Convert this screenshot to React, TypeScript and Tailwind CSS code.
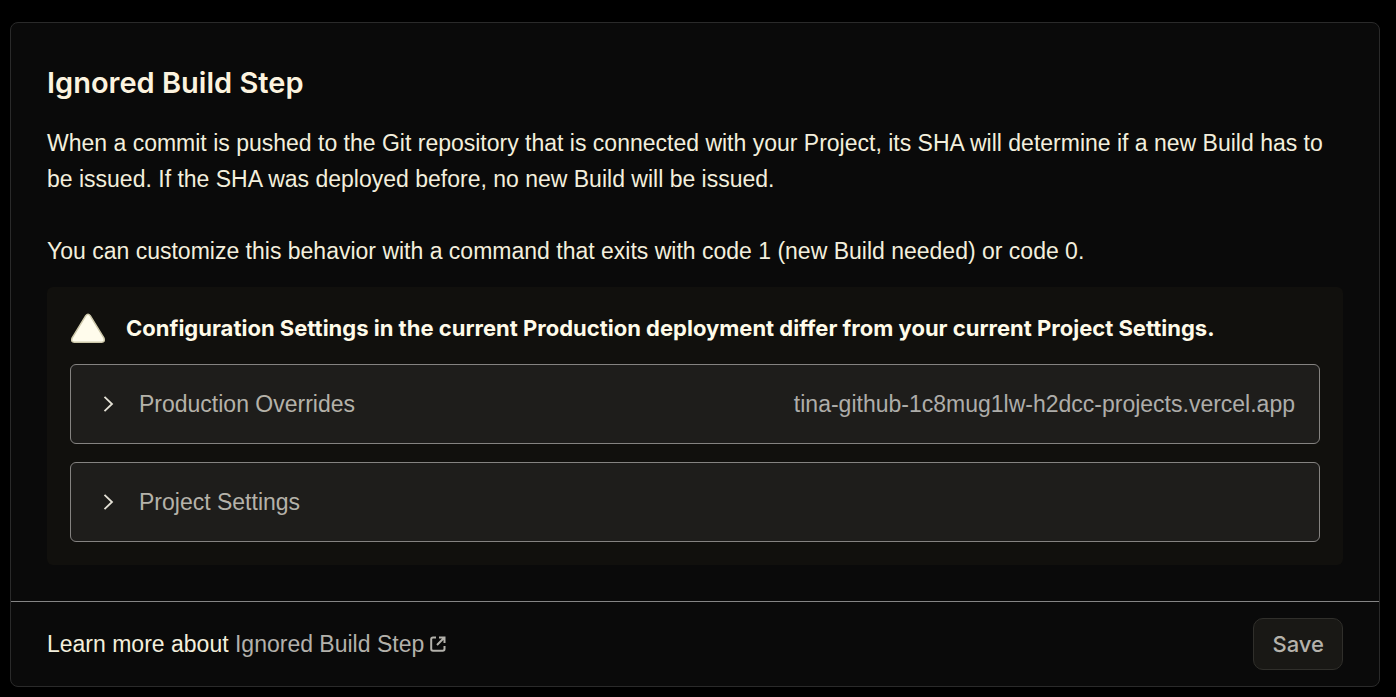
import type { ReactNode } from "react";

function Disclosure({ title, children }: { title: string; children?: ReactNode }) {
  return (
    <button
      type="button"
      aria-expanded="false"
      className="flex h-20 w-full items-center rounded-md border border-[#858381] bg-[#1e1d1b] px-6 text-left text-[#b5b2a9]"
    >
      <svg viewBox="0 0 28 28" className="mr-4 size-7 shrink-0" fill="none" stroke="#e4e1d6" strokeWidth="1.8" aria-hidden="true">
        <path d="M9.5 6.8 L17 14 L9.5 21.2" />
      </svg>
      <span>{title}</span>
      {children && <span className="ml-auto text-[#aeadaa]">{children}</span>}
    </button>
  );
}

export default function App() {
  return (
    <main className="min-h-screen bg-black pt-[22px] pr-4 pb-2 pl-2.5 font-['Liberation_Sans',sans-serif] text-[23px] leading-9 text-[#f3efdd]">
      <section className="overflow-hidden rounded-lg border border-[#2a2a2a] bg-[#0a0a0a]">
        <div className="px-9 pt-10 pb-9">
          <h1 className="mb-[22px] font-['Inter',sans-serif] text-[29px] leading-10 font-semibold text-[#fcf3df]">Ignored Build Step</h1>
          <p>
            When a commit is pushed to the Git repository that is connected with your Project, its SHA will determine if a new Build has to be issued. If the SHA was deployed before, no new Build will be issued.
          </p>
          <p className="mt-9">You can customize this behavior with a command that exits with code 1 (new Build needed) or code 0.</p>
          <div className="mt-[18px] rounded-md bg-[#11100d] p-[23px]">
            <div className="mb-[18px] flex items-center gap-5 font-['Inter',sans-serif] text-[22px] font-bold text-[#fffbe9]">
              <svg viewBox="0 0 36 32" className="h-8 w-9" fill="#fffcec" stroke="#cdc8aa" strokeWidth="1.5" strokeLinejoin="round" aria-hidden="true">
                <path d="M15.8 3.6 Q18 .7 20.2 3.6 L34 26.2 Q35.4 30.2 31.6 30.2 H4.4 Q.6 30.2 2 26.2 Z" />
              </svg>
              Configuration Settings in the current Production deployment differ from your current Project Settings.
            </div>
            <div className="flex flex-col gap-[18px]">
              <Disclosure title="Production Overrides">tina-github-1c8mug1lw-h2dcc-projects.vercel.app</Disclosure>
              <Disclosure title="Project Settings" />
            </div>
          </div>
        </div>
        <footer className="flex items-center justify-between border-t border-[#858585] px-9 py-4">
          <p>
            Learn more about{" "}
            <a href="#ignored-build-step" className="text-[#b3b1ab]">
              Ignored Build Step
              <svg viewBox="0 0 16 16" className="ml-1.5 inline size-4 align-baseline" fill="none" stroke="currentColor" strokeWidth="2" aria-hidden="true">
                <path d="M6 1.5 H3 Q1.2 1.5 1.2 3.3 V13 Q1.2 14.8 3 14.8 H12.7 Q14.5 14.8 14.5 13 V10 M9 1.5 H14.5 V7 M14.2 1.8 L7 9" />
              </svg>
            </a>
          </p>
          <button type="button" className="rounded-[10px] border border-[#302f2b] bg-[#191815] px-[18px] py-[7px] font-['Inter',sans-serif] text-[22px] font-medium text-[#b5b2ab]">
            Save
          </button>
        </footer>
      </section>
    </main>
  );
}
